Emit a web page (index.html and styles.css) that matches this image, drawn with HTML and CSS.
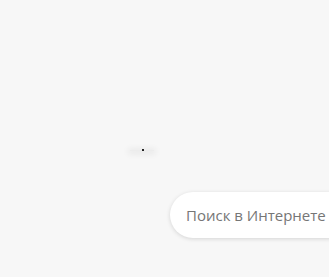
FILE: index.html
```html
<!DOCTYPE html>
<html lang="ru">
<head>
<meta charset="utf-8">
<link rel="stylesheet" href="styles.css">
</head>
<body>
<div class="page">
  <div class="marker"><span class="dot"></span></div>
  <div class="search-row">
    <div class="search">Поиск в Интернете</div>
  </div>
</div>
</body>
</html>
```
FILE: styles.css
```css
html, body {
  margin: 0;
  padding: 0;
  background: #f7f7f7;
}
.page {
  position: relative;
  width: 329px;
  height: 277px;
  overflow: hidden;
  font-family: "Open Sans", "Noto Sans", sans-serif;
}
.marker {
  position: absolute;
  left: 130px;
  top: 150px;
  width: 24px;
  height: 1px;
  background: #ececec;
  box-shadow: 0 1px 6px 2px rgba(0,0,0,0.07);
}
.dot {
  position: absolute;
  left: 12px;
  top: -1px;
  width: 2px;
  height: 2px;
  background: #222;
}
.search-row {
  display: flex;
  padding-top: 192px;
  padding-left: 170px;
}
.search {
  flex: none;
  width: 180px;
  height: 46px;
  box-sizing: border-box;
  padding-left: 16px;
  display: flex;
  align-items: center;
  background: #ffffff;
  border-radius: 23px;
  box-shadow: 0 1px 4px rgba(0,0,0,0.14);
  color: #767676;
  font-size: 15px;
  white-space: nowrap;
}
```
